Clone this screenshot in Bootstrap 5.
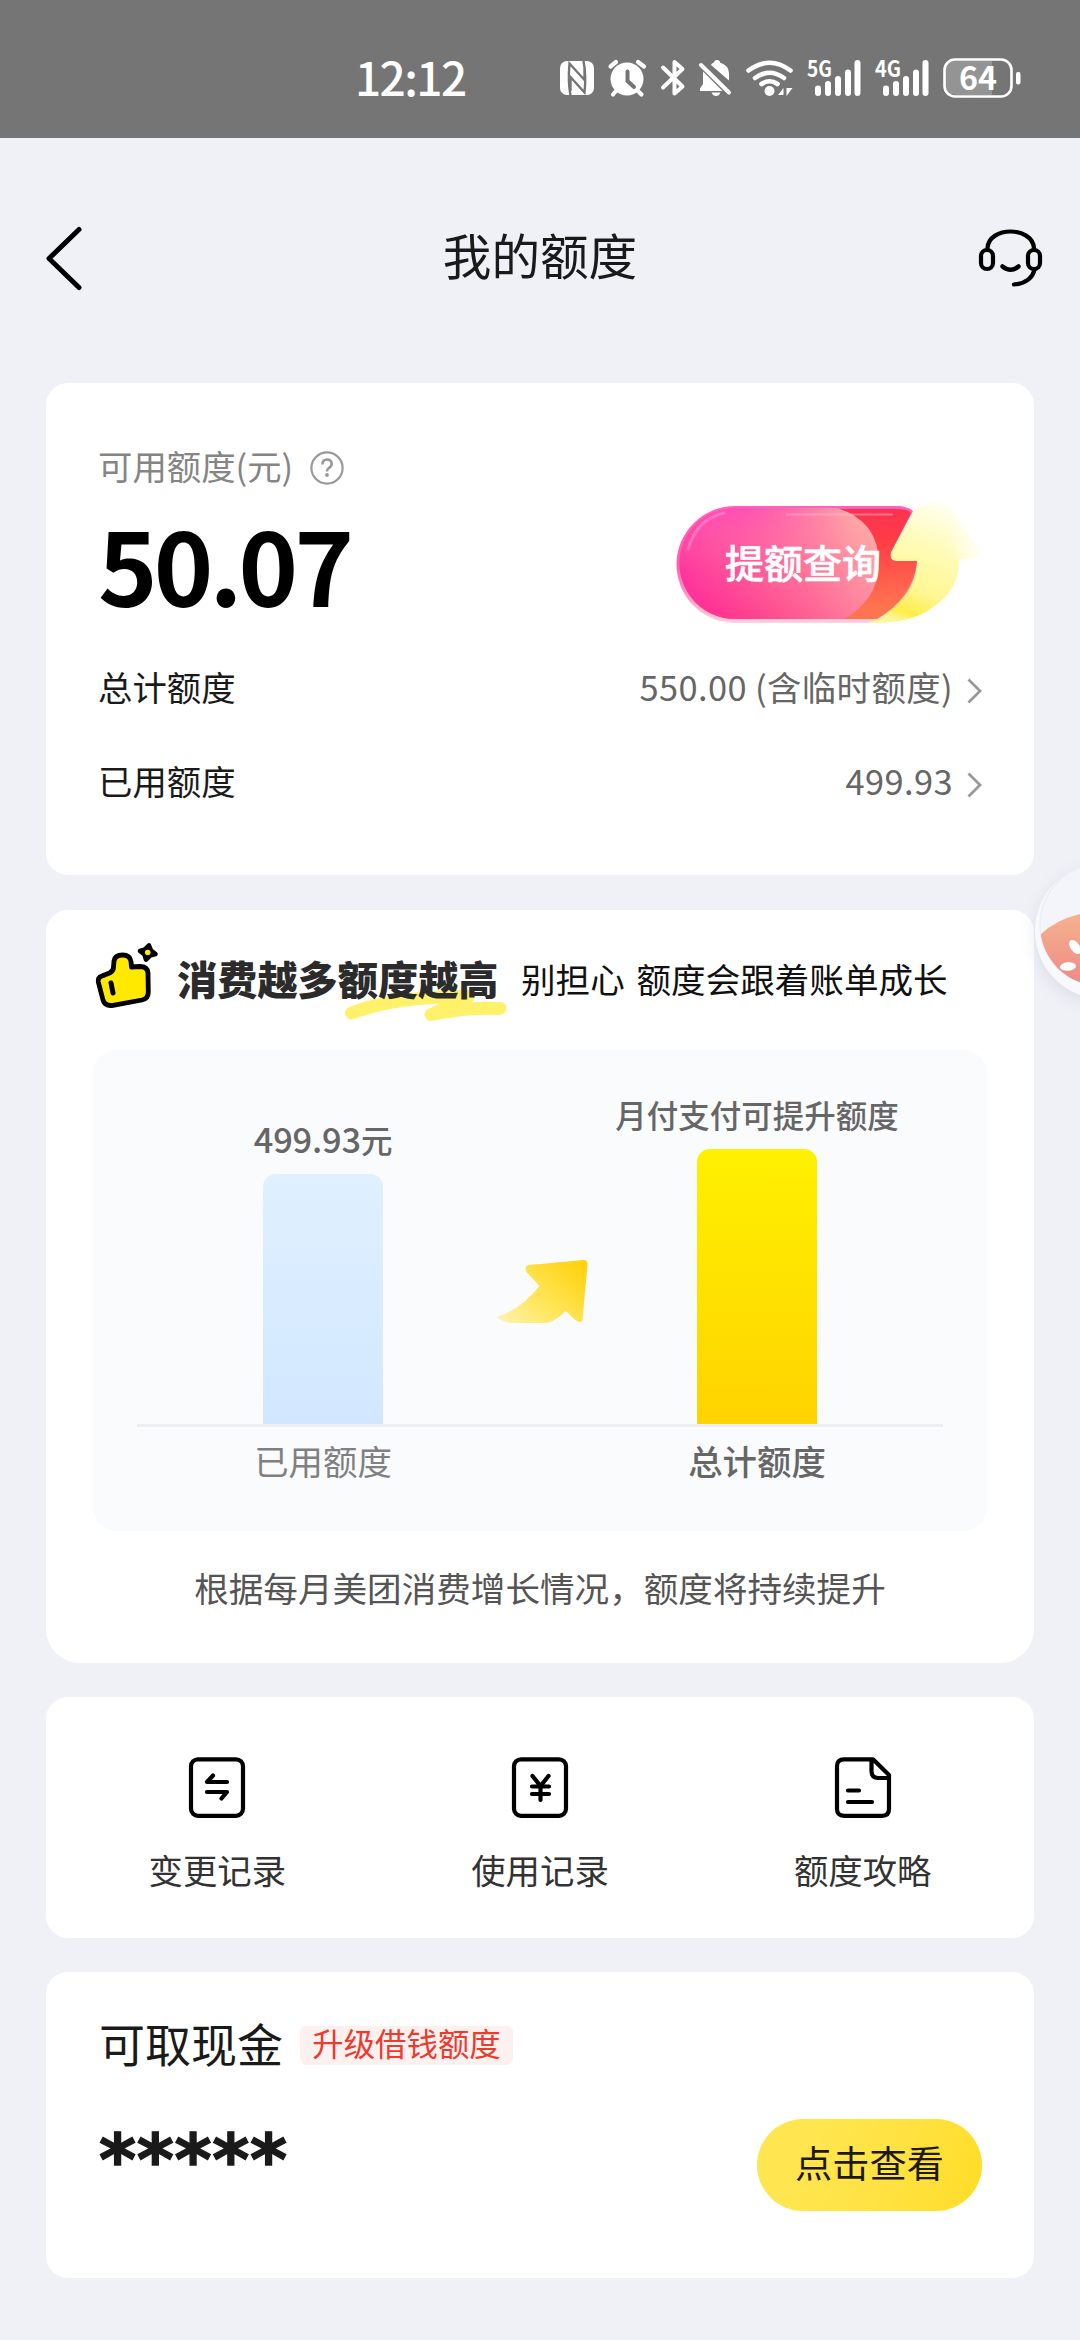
<!DOCTYPE html>
<html lang="zh-CN">
<head>
<meta charset="utf-8">
<meta name="viewport" content="width=device-width, initial-scale=1">
<title>我的额度</title>
<link href="https://cdn.jsdelivr.net/npm/bootstrap@5.3.0/dist/css/bootstrap.min.css" rel="stylesheet">
<style>
  body { width: 1080px; height: 2340px; overflow: hidden; background: #f0f1f7; color: #1a1a1a;
    font-family: "Noto Sans CJK SC", "Noto Sans", sans-serif; font-size: 34.4px; line-height: 1.2; }
  svg { display: block; flex: none; overflow: visible; }
  .status { height: 138px; background: #757575; color: #fff; padding: 0 56px 0 355px; }
  .clock { font-size: 46px; font-weight: 500; line-height: 60px; width: 205px; flex: none; letter-spacing: -1.6px; margin-top: 13px; }
  .status svg { margin-top: 17px; }
  .topbar { height: 245px; padding: 0 38px 5px 46px; }
  .topbar h1 { font-size: 48.6px; font-weight: 400; margin: -9px 8px 0 0; line-height: 60px; }
  .panel-card { border: 0; border-radius: 22px; background: #fff; }
  .stack { padding: 0 46px; gap: 34px; }
  .c-quota { height: 492px; padding: 62px 52px 0 52px; }
  .label-row { height: 42px; color: #858585; gap: 17px; }
  .amount-row { height: 153px; }
  .amount { font-size: 101px; font-weight: 700; color: #000; line-height: 110px; letter-spacing: -3.8px; margin-top: -2px; }
  .info-row { height: 94px; }
  .info-row .val { color: #666; gap: 14px; }
  .info-row .num { letter-spacing: .4px; }
  .c-grow { height: 753px; margin-top: 1px; border-radius: 22px 22px 34px 34px; }
  .grow-head { height: 140px; padding-left: 48px; }
  .slogan { font-size: 40.2px; font-weight: 900; color: #2b2b2b; line-height: 50px; margin: -4px 0 0 16px; width: 320px; }
  .slogan span { position: relative; z-index: 1; white-space: nowrap; }
  .slogan svg { position: absolute; left: 168px; top: 36px; }
  .subline { color: #111; margin: -3px 0 0 24px; white-space: nowrap; font-size: 34.6px; word-spacing: 4px; }
  .chart { height: 481px; margin: 0 47px; border-radius: 24px; background: #fafbfd; padding: 0 44px; color: #666; }
  .plot { height: 377px; border-bottom: 3px solid #eeeff2; }
  .plot .side, .axis .side { width: 372px; flex: none; }
  .plot .mid, .axis .mid { width: 62px; flex: none; }
  .bar { width: 120px; border-radius: 13px 13px 0 0; }
  .bar-used { background: linear-gradient(#dff0ff, #d2e7ff); }
  .bar-total { background: linear-gradient(#fff000, #ffd300); }
  .bar-cap { line-height: 40px; font-weight: 500; white-space: nowrap; }
  .axis { line-height: 42px; padding-top: 12px; }
  .note { height: 110px; color: #555; padding-top: 3px; font-size: 34.6px; }
  .c-menu { height: 241px; padding: 0 10px; }
  .c-menu .item { color: #333; gap: 31px; padding-top: 60px; line-height: 40px; }
  .c-cash { height: 306px; padding: 0 52px 0 53px; }
  .cash-head { height: 74px; margin-top: 36px; gap: 17px; }
  .cash-head h2 { font-size: 46px; font-weight: 400; margin: -6px 0 0; line-height: 54px; }
  .tag { height: 39px; width: 213px; border-radius: 6px; background: #fdf1f0; color: #ec3a2f; font-size: 31.4px; line-height: 34px; }
  .stars { font-family: "DejaVu Sans", sans-serif; font-weight: 700; font-size: 71px; line-height: 80px; margin-top: 39px; letter-spacing: .6px; -webkit-text-stroke: 1.4px #1a1a1a; }
  .btn-view { width: 225px; height: 92px; border-radius: 46px; border: 0; padding: 0 0 5px; font-size: 37.2px; color: #1d1800;
    background: linear-gradient(110deg, #ffe650 20%, #ffe242 60%, #ffdc26); }
  .floaty { position: absolute; left: 1020px; top: 845px; width: 60px; height: 180px; overflow: hidden; }
</style>
</head>
<body class="position-relative">
<header class="status d-flex align-items-center">
  <div class="clock">12:12</div>
  <svg width="464" height="44" viewBox="560 56 464 44" fill="#fff">
    <!-- nfc -->
    <rect x="560" y="61" width="34" height="34" rx="7"/>
    <path d="M570.500 95.500C568.500 85 568.500 74 569.500 63.500L584.500 80V66M583.500 61C585.500 71 585.500 83 584.500 92.500L570.500 77V91" fill="none" stroke="#757575" stroke-width="2.400"/>
    <!-- alarm -->
    <circle cx="627" cy="79" r="16.500"/>
    <path d="M610.500 66.500l5.500-4.500M638 62l6 4.500M616 91l-3 3.500M638 91l3.500 3.500" stroke="#fff" stroke-width="4.200" stroke-linecap="round"/>
    <path d="M627.500 71.500v9.500l6.500 6" fill="none" stroke="#757575" stroke-width="4" stroke-linecap="round" stroke-linejoin="round"/>
    <!-- bluetooth -->
    <path d="M663 67.500L682.500 86.500L674.500 93.500V62L682.500 69L663 87.500" fill="none" stroke="#fff" stroke-width="4" stroke-linecap="round" stroke-linejoin="round"/>
    <!-- muted bell -->
    <path d="M711 65c1-2 2-2 3-2.500q0-2.500 3-2.500t3 2.500q8.500 2.500 9 11v7zM703 71.500l19.500 19.500H700v-2.500l3-4.500zM711.500 92.500h9q-1.500 3.500-4.500 3.500t-4.500-3.500z"/>
    <path d="M701 65l28 27.500" stroke="#fff" stroke-width="4" stroke-linecap="round"/>
    <!-- wifi -->
    <g fill="none" stroke="#fff" stroke-width="4.600" stroke-linecap="round"><path d="M748.500 70.500q21-15.500 42 0M755 78q14.500-10.500 29 0M761.500 84q8-5.500 16 0"/></g>
    <circle cx="769.500" cy="91" r="5"/>
    <path d="M783.500 88v7h-5.500zM786.500 88h6l-6 8z"/>
    <!-- 5G -->
    <text x="807" y="76.500" font-size="22.500" font-weight="700" textLength="25" lengthAdjust="spacingAndGlyphs">5G</text>
    <g stroke="#fff" stroke-width="6" stroke-linecap="round"><path d="M818 88.500v4.500M828 84v9M838 79v14M848 72.500v20.500M857.500 63v30"/></g>
    <!-- 4G -->
    <text x="875" y="76.500" font-size="22.500" font-weight="700" textLength="26" lengthAdjust="spacingAndGlyphs">4G</text>
    <g stroke="#fff" stroke-width="6" stroke-linecap="round"><path d="M886 88.500v4.500M896 84v9M906 79v14M916 72.500v20.500M925.500 63v30"/></g>
    <!-- battery -->
    <path d="M956 61h36v34h-36q-11 0-11-11V72q0-11 11-11z" fill="#949494"/>
    <rect x="944.500" y="59.500" width="67" height="37" rx="10.500" fill="none" stroke="#fff" stroke-width="2.600"/>
    <rect x="1016" y="72" width="4.500" height="12.500" rx="2"/>
    <text x="978" y="89.800" font-size="32" font-weight="700" text-anchor="middle" textLength="38" lengthAdjust="spacingAndGlyphs">64</text>
  </svg>
</header>

<nav class="topbar d-flex align-items-center justify-content-between">
  <svg width="64" height="64" viewBox="0 0 64 64"><path d="M33 3.500L3 32.500L33 61.500" fill="none" stroke="#000" stroke-width="5" stroke-linecap="round" stroke-linejoin="round"/></svg>
  <h1>我的额度</h1>
  <svg width="64" height="60" viewBox="978 230 64 60" fill="none" stroke="#000" stroke-width="4.200" stroke-linecap="round">
    <path d="M987.500 250C989 228 1032 228 1034 250M1034.500 272Q1031 285 1014 286.500"/>
    <rect x="981" y="252" width="12" height="19" rx="6"/><rect x="1028" y="252" width="12" height="19" rx="6"/>
    <path d="M1002.500 268.500q8 6.500 16 0" stroke-width="4.500"/>
  </svg>
</nav>

<main class="stack d-flex flex-column">
  <section class="card panel-card c-quota">
    <div class="label-row d-flex align-items-center"><span>可用额度(元)</span>
      <svg class="mt-1" width="34" height="34" viewBox="0 0 34 34" fill="none" stroke="#999" stroke-width="2.200"><circle cx="17" cy="17" r="15.600"/><path d="M12.300 13.500q.3-5 4.700-5t4.700 4.300q0 2.600-2.800 4.200-1.900 1.200-1.900 3.600" stroke-width="2.600"/><circle cx="17" cy="24" r="1.900" fill="#999" stroke="none"/></svg>
    </div>
    <div class="amount-row d-flex align-items-center justify-content-between">
      <div class="amount">50.07</div>
      <svg width="305" height="130" viewBox="0 0 305 130" role="button">
        <defs>
          <linearGradient id="pk" x1=".1" y1=".8" x2="1" y2=".4"><stop offset="0" stop-color="#ff2e9c"/><stop offset=".35" stop-color="#ff5c96"/><stop offset="1" stop-color="#ffa3a6"/></linearGradient>
          <linearGradient id="pt" x1="0" y1="0" x2="0" y2="1"><stop offset="0" stop-color="#ff45bd" stop-opacity=".75"/><stop offset=".55" stop-color="#ff60b0" stop-opacity=".15"/><stop offset="1" stop-color="#ff3a70" stop-opacity=".3"/></linearGradient>
          <linearGradient id="fd" x1="0" y1="0" x2="1" y2="0"><stop offset=".3" stop-color="#fff"/><stop offset=".85" stop-color="#000"/></linearGradient>
          <mask id="mk"><rect width="205" height="130" fill="url(#fd)"/></mask>
          <linearGradient id="rd" x1="0" y1="0" x2=".15" y2="1"><stop offset="0" stop-color="#f92e55"/><stop offset=".4" stop-color="#ff3c46"/><stop offset="1" stop-color="#ff7450"/></linearGradient>
          <linearGradient id="yl" x1=".7" y1="0" x2=".35" y2="1"><stop offset="0" stop-color="#fffff2"/><stop offset=".4" stop-color="#fffbb4"/><stop offset=".72" stop-color="#fff795"/><stop offset=".92" stop-color="#ffed48"/><stop offset="1" stop-color="#fff59a"/></linearGradient>
          <linearGradient id="rm" x1="0" y1="0" x2="0" y2="1"><stop offset="0" stop-color="#ff62bd"/><stop offset=".5" stop-color="#ff60b0"/><stop offset="1" stop-color="#ffd0dc"/></linearGradient>
          <linearGradient id="tf" x1="0" y1="0" x2="1" y2="0"><stop offset="0" stop-color="#fff" stop-opacity="0"/><stop offset="1" stop-color="#fff" stop-opacity=".85"/></linearGradient>
        </defs>
        <path d="M237 11Q249 3 262 4Q271 5 278 16Q288 33 303 50Q304 57 296 58L282 60Q283 91 255 109Q236 123 200 124H188V40Z" fill="url(#yl)"/>
        <path d="M272 8Q288 33 303 50Q304 57 296 58L272 60Z" fill="url(#tf)"/>
        <path d="M58 7H222Q232 8 236 12L214 53Q212 61 218 62H240Q238 99 200 120L190 124H58A58.500 58.500 0 0 1 58 7Z" fill="url(#rm)"/>
        <path d="M58 10H219Q232 10 234 14L214 53Q212 61 218 62H240Q236 99 200 120H58A55 55 0 0 1 58 10Z" fill="url(#rd)"/>
        <path d="M58 9H160Q202 22 202 65Q201 101 167 120H58A55.500 55.500 0 0 1 58 9Z" fill="url(#pk)"/>
        <path d="M58 9H160Q202 22 202 65Q201 101 167 120H58A55.500 55.500 0 0 1 58 9Z" fill="url(#pt)" mask="url(#mk)"/>
        <path d="M11 50Q20 20 47 14" fill="none" stroke="#ff9bdc" stroke-width="3" stroke-linecap="round" opacity=".45"/>
        <path d="M110 15.500H215" fill="none" stroke="#ffc0d4" stroke-width="2" stroke-linecap="round" opacity=".45"/>
        <text x="48" y="79" font-size="39" font-weight="500" fill="#fff" stroke="#fff" stroke-width=".6">提额查询</text>
      </svg>
    </div>
    <div class="info-row d-flex align-items-center justify-content-between"><span>总计额度</span>
      <div class="val d-flex align-items-center"><span class="num">550.00 (含临时额度)</span><svg class="mt-2" width="15" height="26" viewBox="0 0 15 26"><path d="M1.500 1.500L13 13L1.500 24.500" fill="none" stroke="#999" stroke-width="2.800"/></svg></div></div>
    <div class="info-row d-flex align-items-center justify-content-between"><span>已用额度</span>
      <div class="val d-flex align-items-center"><span class="num">499.93</span><svg class="mt-2" width="15" height="26" viewBox="0 0 15 26"><path d="M1.500 1.500L13 13L1.500 24.500" fill="none" stroke="#999" stroke-width="2.800"/></svg></div></div>
  </section>

  <section class="card panel-card c-grow">
    <div class="grow-head d-flex align-items-center">
      <svg width="67" height="70" viewBox="0 5 67 70" stroke="#000" stroke-linejoin="round" stroke-linecap="round">
        <path d="M4.300 42Q3.500 37.500 8 36L15.500 33Q19.500 31 19.500 27L20 21Q21 15 28.500 15Q36 15 37 21.500L37.500 27L46 26.500Q53.500 26.500 54 33L54.300 52Q54.300 58.500 48 60L19 65.300Q11 66.500 9 60Z" fill="#ffe900" stroke-width="4.800"/>
        <path d="M17 43l2 10" stroke-width="5" fill="none"/>
        <path d="M55 5.500L57 10.500L61.500 14L56 15.500L52 19.500L50.500 14.500L46 11L51 9.500Z" fill="#ffe900" stroke-width="4.600"/>
        <circle cx="53.700" cy="12.500" r="2.800" fill="#ffe900" stroke="none"/>
      </svg>
      <div class="slogan position-relative">
        <svg width="164" height="34" viewBox="344 990 164 34" fill="none" stroke="#fff16a" stroke-width="13" stroke-linecap="round" stroke-linejoin="round"><path d="M350.500 1014Q395 997 467 997.500M430 1015.500Q465 1008 499 1009.500"/><path d="M410 1001L466 998L434 1012" stroke-width="10"/></svg>
        <span>消费越多额度越高</span>
      </div>
      <div class="subline">别担心 额度会跟着账单成长</div>
    </div>
    <div class="chart">
      <div class="plot d-flex align-items-end">
        <div class="side d-flex flex-column align-items-center">
          <div class="bar-cap" style="margin-bottom:15px;letter-spacing:-.2px">499.93<span style="font-size:31.500px">元</span></div>
          <div class="bar bar-used" style="height:250px"></div>
        </div>
        <div class="mid d-flex justify-content-center">
          <svg width="92" height="64" viewBox="-2.500 0 92 64" style="margin-bottom:100px">
            <defs><linearGradient id="ar" x1="0" y1="1" x2="1" y2=".2"><stop offset="0" stop-color="#fff3b8"/><stop offset=".45" stop-color="#ffe65c"/><stop offset="1" stop-color="#ffd312"/></linearGradient></defs>
            <path d="M0 57Q24 50 43 26L30 12Q27 6 33 5L87 0Q91 0 91 4L86 60Q84 64 79 60L69 51Q57 63 49 63H16Q9 63 0 57Z" fill="url(#ar)"/>
          </svg>
        </div>
        <div class="side d-flex flex-column align-items-center">
          <div class="bar-cap" style="font-size:31.500px;margin-bottom:15px">月付支付可提升额度</div>
          <div class="bar bar-total" style="height:275px"></div>
        </div>
      </div>
      <div class="axis d-flex text-center">
        <div class="side" style="color:#808080">已用额度</div><div class="mid"></div><div class="side" style="font-weight:500">总计额度</div>
      </div>
    </div>
    <div class="note d-flex align-items-center justify-content-center">根据每月美团消费增长情况，额度将持续提升</div>
  </section>

  <section class="card panel-card c-menu">
    <div class="row g-0">
      <div class="col item d-flex flex-column align-items-center">
        <svg width="56" height="61" viewBox="0 0 56 61" fill="none" stroke="#000" stroke-width="4.200" stroke-linecap="round" stroke-linejoin="round"><rect x="2" y="2.300" width="52" height="56.500" rx="7"/><path d="M38 25H18L24 18.500M18 35H38L32.500 41.500"/></svg>
        <span>变更记录</span></div>
      <div class="col item d-flex flex-column align-items-center">
        <svg width="56" height="61" viewBox="0 0 56 61" fill="none" stroke="#000" stroke-width="4.200" stroke-linecap="round" stroke-linejoin="round"><rect x="2" y="2.300" width="52" height="56.500" rx="7"/><path d="M20.500 19L28.500 29L36.500 19M28.500 29V43M20 29.500H37M20 37H37"/></svg>
        <span>使用记录</span></div>
      <div class="col item d-flex flex-column align-items-center">
        <svg width="56" height="61" viewBox="0 0 56 61" fill="none" stroke="#000" stroke-width="4.200" stroke-linecap="round" stroke-linejoin="round"><path d="M9 2.300H38L54 18V52Q54 58.800 47 58.800H9Q2 58.800 2 52V9Q2 2.300 9 2.300ZM36.500 3V14Q36.500 21 43 21H53M13 33.500H24M13 45H37"/></svg>
        <span>额度攻略</span></div>
    </div>
  </section>

  <section class="card panel-card c-cash">
    <div class="cash-head d-flex align-items-center"><h2>可取现金</h2><span class="tag text-center">升级借钱额度</span></div>
    <div class="d-flex justify-content-between align-items-start">
      <div class="stars">*****</div>
      <button class="btn btn-view" style="margin-top:37px">点击查看</button>
    </div>
  </section>
</main>

<div class="floaty">
  <svg width="120" height="180" viewBox="1020 845 120 180">
    <defs><linearGradient id="og" x1="0" y1="0" x2="0" y2="1"><stop offset="0" stop-color="#f5b48e"/><stop offset="1" stop-color="#ec8585"/></linearGradient>
    <filter id="sh" x="-30%" y="-30%" width="160%" height="160%"><feGaussianBlur stdDeviation="8"/></filter>
    <clipPath id="cc"><circle cx="1101" cy="925" r="61"/></clipPath></defs>
    <circle cx="1103" cy="936" r="68" fill="#8890a8" opacity=".2" filter="url(#sh)"/>
    <circle cx="1103" cy="931" r="68" fill="#f8f9fd"/>
    <circle cx="1101" cy="925" r="61" fill="#f3f5fb" stroke="#eceef6" stroke-width="1.500"/>
    <g clip-path="url(#cc)"><path d="M1038 937Q1055 919 1085 913L1140 910V995H1038Z" fill="url(#og)"/></g>
    <ellipse cx="1075" cy="947" rx="4.500" ry="8" transform="rotate(-35 1075 947)" fill="#fff"/>
    <ellipse cx="1068" cy="966.500" rx="8" ry="4.200" transform="rotate(-5 1068 966.500)" fill="#fff"/>
  </svg>
</div>
<script src="https://cdn.jsdelivr.net/npm/bootstrap@5.3.0/dist/js/bootstrap.bundle.min.js"></script>
</body>
</html>
